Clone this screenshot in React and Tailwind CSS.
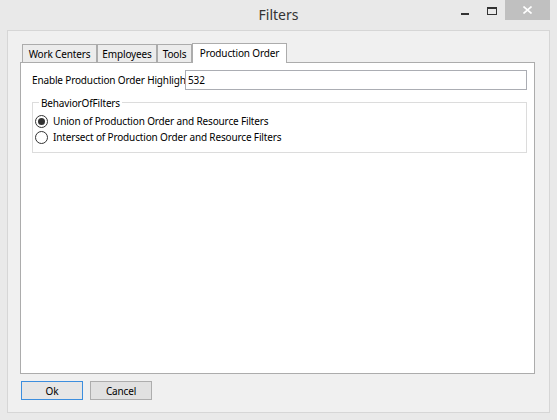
import React from "react";

const font = { fontFamily: '"Noto Sans", "Open Sans", sans-serif' };

function Tab({ label, active, w }) {
  if (active) {
    return (
      <div
        className="relative z-10 -mb-px flex h-[20px] items-start justify-center border border-b-0 border-[#acacac] bg-white pt-[2px] text-[10px] leading-[14px] tracking-[-0.15px] text-black"
        style={{ width: w }}
      >
        {label}
      </div>
    );
  }
  return (
    <div
      className="flex h-[18px] items-start justify-center border border-b-0 border-[#acacac] bg-[#ececec] pt-[2px] text-[10px] leading-[14px] tracking-[-0.15px] text-black"
      style={{ width: w }}
    >
      {label}
    </div>
  );
}

function Radio({ checked, label }) {
  return (
    <div className="flex h-[16px] items-center">
      <div className="flex h-[13px] w-[13px] items-center justify-center rounded-full border border-[#333333] bg-white">
        {checked && <div className="h-[7px] w-[7px] rounded-full bg-[#333333]" />}
      </div>
      <span className="ml-[5px] text-[10px] leading-[14px] tracking-[-0.15px] text-black">{label}</span>
    </div>
  );
}

export default function App() {
  return (
    <div className="flex h-[420px] w-[557px] flex-col bg-[#e9e9e9]" style={font}>
      {/* Title bar */}
      <div className="grid h-[30px] grid-cols-[1fr_auto_1fr]">
        <div />
        <div className="pt-[5px] text-[14px] leading-[20px] text-[#333333]">Filters</div>
        <div className="flex items-start justify-end pr-[7px]">
          <div className="mt-[13px] h-[2px] w-[8px] bg-[#333333]" />
          <div className="ml-[18px] mt-[7px] h-[8px] w-[10px] border border-t-2 border-[#333333]" />
          <div className="ml-[8px] flex h-[20px] w-[45px] items-center justify-center bg-[#c0c0c0]">
            <svg width="9" height="8" viewBox="0 0 9 8">
              <path d="M0.5 0.5 L8.5 7.5 M8.5 0.5 L0.5 7.5" stroke="#ffffff" strokeWidth="1.6" />
            </svg>
          </div>
        </div>
      </div>

      {/* Client area */}
      <div className="mx-[7px] mb-[7px] flex flex-1 flex-col border border-[#d6d6d6] bg-[#f0f0f0] pt-[12px]">
        {/* Tabs */}
        <div className="flex h-[19px] items-end pl-[14px]">
          <Tab label="Work Centers" w={75} />
          <Tab label="Employees" w={60} />
          <Tab label="Tools" w={35} />
          <Tab label="Production Order" w={95} active />
        </div>
        {/* Panel */}
        <div className="ml-[12px] flex h-[312px] w-[515px] flex-col border border-[#acacac] bg-white pl-[11px] pr-[7px] pt-[7px]">
          <div className="flex h-[20px] items-center">
            <span className="w-[153px] overflow-hidden whitespace-nowrap text-[10px] leading-[14px] tracking-[-0.15px] text-black">
              Enable Production Order Highligh
            </span>
            <div className="flex h-[20px] w-[342px] items-center border border-[#abadb3] bg-white pl-[2px] text-[10px] leading-[14px] tracking-[-0.15px] text-black">
              532
            </div>
          </div>
          {/* Group box */}
          <div className="relative mt-[12px] h-[51px] w-[495px] border border-[#dcdcdc] pl-[2px] pt-[10px]">
            <div className="absolute -top-[7px] left-[6px] bg-white px-[2px] text-[10px] leading-[14px] tracking-[-0.15px] text-black">
              BehaviorOfFilters
            </div>
            <Radio checked label="Union of Production Order and Resource Filters" />
            <Radio label="Intersect of Production Order and Resource Filters" />
          </div>
        </div>
        {/* Buttons */}
        <div className="ml-[13px] mt-[7px] flex gap-[7px]">
          <div className="flex h-[19px] w-[62px] items-center justify-center border border-[#3c8ede] bg-[#e6e6e6] text-[10px] leading-[14px] tracking-[-0.15px] text-black">
            Ok
          </div>
          <div className="flex h-[19px] w-[62px] items-center justify-center border border-[#adadad] bg-[#e1e1e1] text-[10px] leading-[14px] tracking-[-0.15px] text-black">
            Cancel
          </div>
        </div>
      </div>
    </div>
  );
}
